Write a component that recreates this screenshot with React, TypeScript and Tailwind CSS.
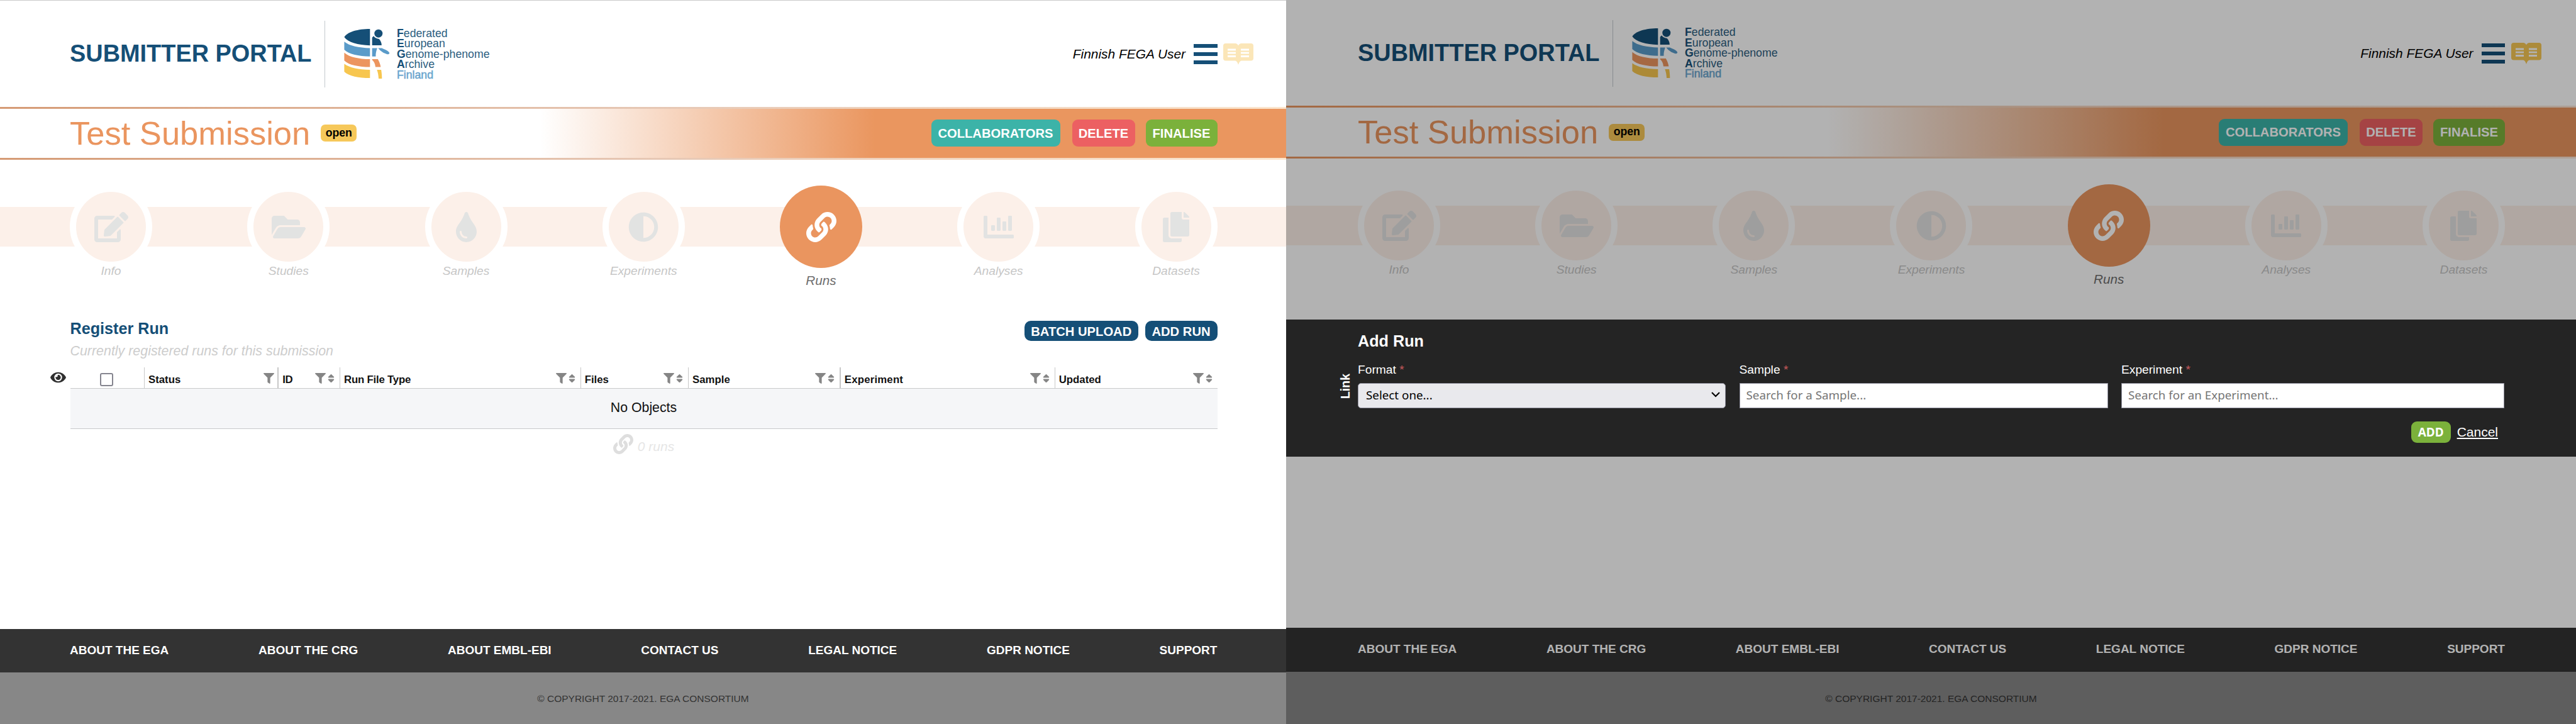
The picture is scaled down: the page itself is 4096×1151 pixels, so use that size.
import type { ReactNode } from "react";
import {
  FaAdjust,
  FaChartBar,
  FaCopy,
  FaEdit,
  FaEye,
  FaFilter,
  FaFolderOpen,
  FaLink,
  FaSort,
  FaTint,
} from "react-icons/fa";

function FegaLogo() {
  return (
    <div className="flex items-center">
      <svg className="h-[83px] w-[77px] shrink-0" viewBox="170 95 320 345">
        <path fill="#154f77" d="M350 103V212C270 209 205 192 180 157C200 122 270 103 350 103Z" />
        <path fill="#5a9bc9" d="M180 188C215 216 275 229 350 230V285C275 283 210 270 180 240Z" />
        <path fill="#ec955f" d="M180 260C215 290 275 302 350 303V355C275 354 210 342 180 312Z" />
        <path fill="#f7c64f" d="M180 334C215 360 275 372 350 373V428C275 427 210 416 180 386Z" />
        <circle cx="406" cy="133" r="27" fill="#154f77" />
        <path fill="#154f77" d="M364 160L374 150C385 165 400 168 410 170C420 180 427 195 427 211H364Z" />
        <path fill="#5a9bc9" d="M364 230H398C392 248 387 262 388 285H364ZM404 230H428C445 238 470 245 479 262C476 271 468 272 461 270C440 262 420 252 404 230Z" />
        <path fill="#ec955f" d="M364 303H402C410 318 418 335 421 355H386C384 332 376 318 364 308Z" />
        <path fill="#f7c64f" d="M396 373H424C427 392 429 410 429 432H407C406 410 403 392 396 373Z" />
      </svg>
      <div className="ml-[9px] text-[17.7px] leading-[16.4px] text-[#2b5d80]">
        <div><b className="text-[#154f77]">F</b>ederated</div>
        <div><b className="text-[#154f77]">E</b>uropean</div>
        <div><b className="text-[#154f77]">G</b>enome-phenome</div>
        <div><b className="text-[#154f77]">A</b>rchive</div>
        <div className="text-[#6aa5ce] [-webkit-text-stroke:0.5px]">Finland</div>
      </div>
    </div>
  );
}

function BookIcon({ className }: { className: string }) {
  return (
    <svg viewBox="0 0 48 34" className={className} fill="currentColor">
      <path
        fillRule="evenodd"
        d="M4 0H19Q22.500 0 24 3.500Q25.500 0 29 0H44Q48 0 48 4V23.500Q48 27.500 44 27.500H29Q26 27.500 24 34Q22 27.500 19 27.500H4Q0 27.500 0 23.500V4Q0 0 4 0ZM7 8.500V11.500H20V8.500ZM28 8.500V11.500H41V8.500ZM7 13.800V16.400H20V13.800ZM28 13.800V16.400H41V13.800ZM7 19V22H20V19ZM28 19V22H41V19Z"
      />
    </svg>
  );
}

function Header({ bookClass }: { bookClass: string }) {
  return (
    <div className="relative flex h-full items-center">
      <div className="w-[405px] text-[37.9px] leading-none font-bold whitespace-nowrap text-[#154f77]">
        SUBMITTER PORTAL
      </div>
      <div className="h-[106px] w-px bg-[#c3cace]" />
      <div className="ml-[28px]">
        <FegaLogo />
      </div>
      <div className="ml-auto flex items-center">
        <span className="text-[20.900px] text-black italic">Finnish FEGA User</span>
        <div className="ml-[13px] flex h-[32px] w-[37.500px] flex-col justify-between">
          <span className="h-[6px] bg-[#154f77]" />
          <span className="h-[6px] bg-[#154f77]" />
          <span className="h-[6px] bg-[#154f77]" />
        </div>
      </div>
      <div className="absolute left-[1834px]">
        <BookIcon className={bookClass} />
      </div>
    </div>
  );
}

function ActionButton({ children, className }: { children: ReactNode; className: string }) {
  return (
    <button className={`flex h-[43px] items-center justify-center rounded-[9px] text-[20.2px] font-bold text-white ${className}`}>
      {children}
    </button>
  );
}

function TitleBar() {
  return (
    <div className="flex h-full items-center">
      <h1 className="text-[52.5px] leading-none text-[#ea955f]">Test Submission</h1>
      <span className="ml-[17px] flex h-[27px] w-[57px] items-center justify-center rounded-[7px] bg-[#f6c85a] pb-[2px] text-[17.7px] font-bold text-black">
        open
      </span>
      <div className="ml-auto flex">
        <ActionButton className="mr-[19px] w-[205px] bg-[#3cb3a8]">COLLABORATORS</ActionButton>
        <ActionButton className="mr-[17px] w-[100px] bg-[#ec6062]">DELETE</ActionButton>
        <ActionButton className="w-[114px] bg-[#7bb13b]">FINALISE</ActionButton>
      </div>
    </div>
  );
}

const steps = [
  { label: "Info", icon: <FaEdit className="h-[48px] w-[54px]" /> },
  { label: "Studies", icon: <FaFolderOpen className="h-[48px] w-[54px]" /> },
  { label: "Samples", icon: <FaTint className="h-[48px] w-[33px]" /> },
  { label: "Experiments", icon: <FaAdjust className="h-[48px] w-[48px]" /> },
  { label: "Runs", icon: <FaLink className="h-[48px] w-[48px]" />, active: true },
  { label: "Analyses", icon: <FaChartBar className="h-[48px] w-[48px]" /> },
  { label: "Datasets", icon: <FaCopy className="h-[48px] w-[42px]" /> },
];

function Stepper({ contentClass }: { contentClass: string }) {
  return (
    <div className="relative h-[250px] pt-[41px]">
      <div className="absolute inset-x-0 top-[75px] h-[63px] bg-[#fcf0e9]" />
      <div className={`relative flex justify-between ${contentClass}`}>
        {steps.map((s) =>
          s.active ? (
            <div key={s.label} className="flex w-[131px] flex-col items-center">
              <div className="flex size-[131px] items-center justify-center rounded-full bg-[#ea955f] text-white">
                {s.icon}
              </div>
              <span className="mt-[8px] text-[20.7px] leading-[24px] text-[#6e6e6e] italic">{s.label}</span>
            </div>
          ) : (
            <div key={s.label} className="flex w-[131px] flex-col items-center">
              <div className="flex size-[131px] items-center justify-center rounded-full border-[10px] border-white bg-[#fcf0e9] text-[#e2e3e2]">
                {s.icon}
              </div>
              <span className="-mt-[7px] text-[19.2px] leading-[24px] text-[#c6c6c6] italic">{s.label}</span>
            </div>
          ),
        )}
      </div>
    </div>
  );
}

const columns = [
  { name: "Status", sep: "border-l", sort: false, text: "tracking-normal" },
  { name: "ID", sep: "border-l-2", sort: true, text: "tracking-[-0.4px]" },
  { name: "Run File Type", sep: "border-l", sort: true, text: "tracking-[-0.2px]" },
  { name: "Files", sep: "border-l", sort: true, text: "tracking-normal" },
  { name: "Sample", sep: "border-l", sort: true, text: "tracking-normal" },
  { name: "Experiment", sep: "border-l-2", sort: true, text: "tracking-[0.2px]" },
  { name: "Updated", sep: "border-l", sort: true, text: "tracking-normal" },
];

function RunTable() {
  return (
    <div>
      <div className="relative grid h-[33.400px] grid-cols-[117.500px_212.300px_98.700px_382.700px_171.400px_240.700px_342px_1fr]">
        <FaEye className="absolute top-[5px] left-[-32px] h-[22px] w-[25px] text-[#2f2f2f]" />
        <div className="pt-[9.500px] pl-[47.500px]">
          <div className="size-[21px] rounded-[3px] border-2 border-[#85858f] bg-white" />
        </div>
        {columns.map((c) => (
          <div key={c.name} className={`flex items-start border-[#c8c8c8] pl-[6px] ${c.sep} ${c.sort ? "pr-[8px]" : "pr-[5px]"}`}>
            <span className={`pt-[8px] text-[16.800px] leading-[24px] font-bold whitespace-nowrap text-[#111] ${c.text}`}>{c.name}</span>
            <span className="ml-auto flex items-center pt-[9.500px] text-[#858585]">
              <FaFilter className="size-[17px]" />
              {c.sort && <FaSort className="ml-[3px] h-[17px] w-[11px]" />}
            </span>
          </div>
        ))}
      </div>
      <div className="flex h-[64.500px] items-center justify-center border-t border-b border-[#c8c9cb] bg-[#f5f6f8] pb-[2px] text-[21.300px] text-[#111]">
        No Objects
      </div>
    </div>
  );
}

function RegisterRun() {
  return (
    <section className="ml-[111.500px] w-[1824px] pt-[3px]">
      <div className="flex items-start justify-between">
        <div>
          <h2 className="text-[25.200px] leading-[30px] font-bold text-[#154f77]">Register Run</h2>
          <p className="mt-[7.500px] text-[21.400px] leading-[26px] text-[#cdcdcd] italic">
            Currently registered runs for this submission
          </p>
        </div>
        <div className="mt-[3px] flex gap-[11px]">
          <button className="h-[32px] w-[180.500px] rounded-[10px] bg-[#154f77] pt-px text-[20.200px] leading-[30px] font-bold text-white">
            BATCH UPLOAD
          </button>
          <button className="h-[32px] w-[115px] rounded-[10px] bg-[#154f77] pt-px text-[20.200px] leading-[30px] font-bold text-white">
            ADD RUN
          </button>
        </div>
      </div>
      <div className="mt-[13.200px]">
        <RunTable />
      </div>
      <div className="mt-[8px] flex items-center justify-center">
        <FaLink className="size-[32px] text-[#dedede]" />
        <span className="ml-[7px] pt-[8px] text-[21px] leading-[24px] text-[#e6e6e6] italic">0 runs</span>
      </div>
    </section>
  );
}

function FieldLabel({ children }: { children: ReactNode }) {
  return (
    <label className="block text-[19.200px] leading-[24px] text-white">
      {children} <span className="text-[#c4595b]">*</span>
    </label>
  );
}

function AddRunPanel() {
  return (
    <section className="relative z-10 mt-[6px] h-[217.800px] bg-[#242424] pt-[18.500px] font-['Liberation_Sans',sans-serif]">
      <div className="ml-[114px] w-[1823px]">
        <h2 className="text-[25.200px] leading-[30px] font-bold text-white">Add Run</h2>
        <div className="relative mt-[19.400px] grid grid-cols-[585px_586px_1fr] gap-x-[21.500px]">
          <span className="absolute bottom-[15px] left-[-32px] rotate-180 text-[19.500px] leading-[24px] font-bold text-white [writing-mode:vertical-rl]">
            Link
          </span>
          <div>
            <FieldLabel>Format</FieldLabel>
            <div className="mt-[8.700px] flex h-[40px] items-center justify-between rounded-[5px] border border-[#8f8f9d] bg-[#e9e9ed] pr-[8px] pb-[2px] pl-[12px] font-['Noto_Sans',sans-serif] text-[18.800px] text-black">
              <span>Select one...</span>
              <svg className="h-[9px] w-[14px]" viewBox="0 0 14 9" fill="none" stroke="black" strokeWidth="2.200">
                <path d="M1 1L7 7L13 1" />
              </svg>
            </div>
          </div>
          <div>
            <FieldLabel>Sample</FieldLabel>
            <input
              className="mt-[8.700px] block h-[40px] w-full border border-[#8f8f9d] bg-white pb-[2px] pl-[10px] font-['Noto_Sans',sans-serif] text-[18.800px] placeholder:text-[#757575]"
              placeholder="Search for a Sample..."
            />
          </div>
          <div>
            <FieldLabel>Experiment</FieldLabel>
            <input
              className="mt-[8.700px] block h-[40px] w-full border border-[#8f8f9d] bg-white pb-[2px] pl-[10px] font-['Noto_Sans',sans-serif] text-[18.800px] placeholder:text-[#757575]"
              placeholder="Search for an Experiment..."
            />
          </div>
        </div>
        <div className="mt-[21px] flex items-center justify-end pr-[10px]">
          <button className="flex h-[34.500px] w-[63px] items-center justify-center rounded-[9px] bg-[#7bb13b] font-['Noto_Sans',sans-serif] text-[19px] font-bold text-white">
            ADD
          </button>
          <a className="ml-[10px] text-[21px] leading-[30px] text-white underline decoration-[1.500px] underline-offset-[2px]">Cancel</a>
        </div>
      </div>
    </section>
  );
}

const footerLinks = [
  "ABOUT THE EGA",
  "ABOUT THE CRG",
  "ABOUT EMBL-EBI",
  "CONTACT US",
  "LEGAL NOTICE",
  "GDPR NOTICE",
  "SUPPORT",
];

function Footer({ contentClass, bottomClass }: { contentClass: string; bottomClass: string }) {
  return (
    <footer className="mt-auto">
      <nav className="h-[69.200px] bg-[#333]">
        <div className={`flex h-full items-center justify-between pb-px text-[19px] font-bold text-white ${contentClass}`}>
          {footerLinks.map((l) => (
            <a key={l}>{l}</a>
          ))}
        </div>
      </nav>
      <div className={`flex items-center justify-center bg-[#878787] pt-[2px] text-[15.500px] text-[#333] ${bottomClass}`}>
        © COPYRIGHT 2017-2021. EGA CONSORTIUM
      </div>
    </footer>
  );
}

function Bar({ contentClass, lineClass }: { contentClass: string; lineClass: string }) {
  return (
    <div>
      <div className={`h-[3px] ${lineClass}`} />
      <div className="h-[78.400px] bg-[linear-gradient(90deg,#ffffff_42%,#ea965f_68%)]">
        <div className={`h-full ${contentClass}`}>
          <TitleBar />
        </div>
      </div>
      <div className={`h-[3px] ${lineClass}`} />
    </div>
  );
}

export default function App() {
  const left = "ml-[111px] w-[1824.500px]";
  const right = "ml-[114px] w-[1824px]";
  return (
    <div className="flex h-[1151px] w-[4096px] overflow-hidden bg-white font-['Liberation_Sans',sans-serif]">
      <div className="flex h-full w-[2045px] shrink-0 flex-col bg-white">
        <header className="h-[169.800px] border-t border-[#c9c9c9]">
          <div className={`h-full pt-px ${left}`}>
            <Header bookClass="h-[34px] w-[48px] text-[#fbe6b8]" />
          </div>
        </header>
        <Bar contentClass={left} lineClass="bg-[linear-gradient(90deg,#d59a74,#e6c7b4_50%,#fbe6cf)]" />
        <Stepper contentClass={left} />
        <RegisterRun />
        <Footer contentClass={left} bottomClass="h-[82px]" />
      </div>
      <div className="relative flex h-full w-[2051px] shrink-0 flex-col bg-white">
        <header className="h-[168px]">
          <div className={`h-full pt-px ${right}`}>
            <Header bookClass="h-[34px] w-[48px] text-[#f6c755]" />
          </div>
        </header>
        <Bar contentClass={right} lineClass="bg-[linear-gradient(90deg,#ea965f,#f3d0b8_50%,#f9e4d6)]" />
        <Stepper contentClass={right} />
        <AddRunPanel />
        <Footer contentClass={right} bottomClass="h-[83.400px]" />
        <div className="pointer-events-none absolute inset-0 bg-black/30" />
      </div>
    </div>
  );
}
